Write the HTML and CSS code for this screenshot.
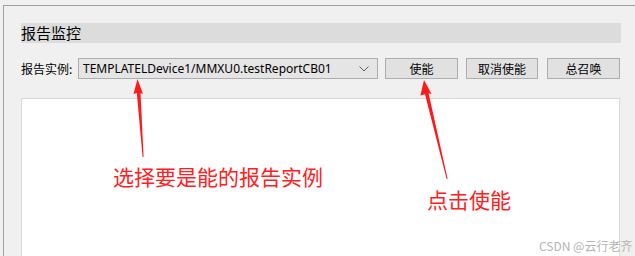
FILE: index.html
```html
<!DOCTYPE html>
<html lang="zh-CN">
<head>
  <meta charset="UTF-8" />
  <title>报告监控</title>
  <link rel="stylesheet" href="styles.css">
</head>
<body>
  <div class="frame">
    <div class="group-title">报告监控</div>

    <div class="toolbar">
      <span class="field-label">报告实例:</span>
      <div class="combo">
        <span class="combo-text">TEMPLATELDevice1/MMXU0.testReportCB01</span>
        <svg class="combo-arrow" width="10" height="6" viewBox="0 0 10 6">
          <path d="M0.5 0.5 L5 5 L9.5 0.5" fill="none" stroke="#606060" stroke-width="1"/>
        </svg>
      </div>
      <button class="btn btn-enable">使能</button>
      <button class="btn btn-cancel">取消使能</button>
      <button class="btn btn-gi">总召唤</button>
    </div>

    <div class="report-panel"></div>
  </div>

  <!-- red annotations drawn over the screenshot -->
  <svg class="marks" width="635" height="256" viewBox="0 0 635 256">
    <polygon fill="#ff1a1a" points="137.5,79 143,94 140.5,93 143.6,157 142.6,157 136.8,93 133.5,94"/>
    <polygon fill="#ff1a1a" points="424,80 431.5,94 428.6,93.2 447.6,179 446.6,179 425,94.2 420.4,95.5"/>
  </svg>
  <div class="note note-select">选择要是能的报告实例</div>
  <div class="note note-enable">点击使能</div>

  <div class="watermark">CSDN @云行老齐</div>
</body>
</html>
```

FILE: styles.css
```css
body {
  margin: 0;
  padding: 0;
  width: 635px;
  height: 256px;
  overflow: hidden;
  position: relative;
  background: #f0f0f0;
  font-family: "Noto Sans", "Noto Sans CJK SC", sans-serif;
  color: #000;
}
.frame {
  margin: 5px 0 0 3px;
  height: 251px;
  box-sizing: border-box;
  padding: 17px 14px 0 17px;
  border-left: 1px solid #a0a0a0;
  border-top: 1px solid #a0a0a0;
  display: flex;
  flex-direction: column;
}
.group-title {
  height: 20px;
  line-height: 20px;
  background: #dcdcdc;
  font-size: 15px;
  font-family: "Noto Sans CJK SC", sans-serif;
}
.toolbar {
  margin-top: 15px;
  height: 21px;
  display: flex;
  align-items: center;
}
.field-label {
  width: 57px;
  font-size: 12px;
  font-family: "Noto Sans CJK SC", sans-serif;
}
.combo {
  width: 300px;
  height: 21px;
  box-sizing: border-box;
  border: 1px solid #adadad;
  background: #e5e5e5;
  display: flex;
  align-items: center;
  padding: 0 8px 0 4px;
}
.combo-text {
  flex: 1;
  font-size: 12px;
  white-space: nowrap;
}
.combo-arrow {
  display: block;
}
.btn {
  height: 21px;
  box-sizing: border-box;
  border: 1px solid #adadad;
  background: #e1e1e1;
  font-size: 12px;
  font-family: "Noto Sans CJK SC", sans-serif;
  padding: 0;
  line-height: 19px;
  color: #000;
}
.btn-enable {
  width: 73px;
  margin-left: 7px;
}
.btn-cancel {
  width: 72px;
  margin-left: 8px;
}
.btn-gi {
  width: 73px;
  margin-left: 9px;
}
.report-panel {
  margin-top: 19px;
  margin-right: 1px;
  flex: 1;
  background: #fff;
  border: 1px solid #d9d9d9;
  border-bottom: none;
}
.marks {
  position: absolute;
  left: 0;
  top: 0;
}
.note {
  position: absolute;
  color: #ff2020;
  font-size: 21px;
  line-height: 26px;
  font-family: "Noto Sans CJK SC", sans-serif;
  white-space: nowrap;
}
.note-select {
  left: 113px;
  top: 163px;
}
.note-enable {
  left: 427px;
  top: 186px;
}
.watermark {
  position: absolute;
  left: 539px;
  top: 237px;
  font-size: 12px;
  color: #b4b4b4;
  font-family: "Noto Sans CJK SC", sans-serif;
}
```
